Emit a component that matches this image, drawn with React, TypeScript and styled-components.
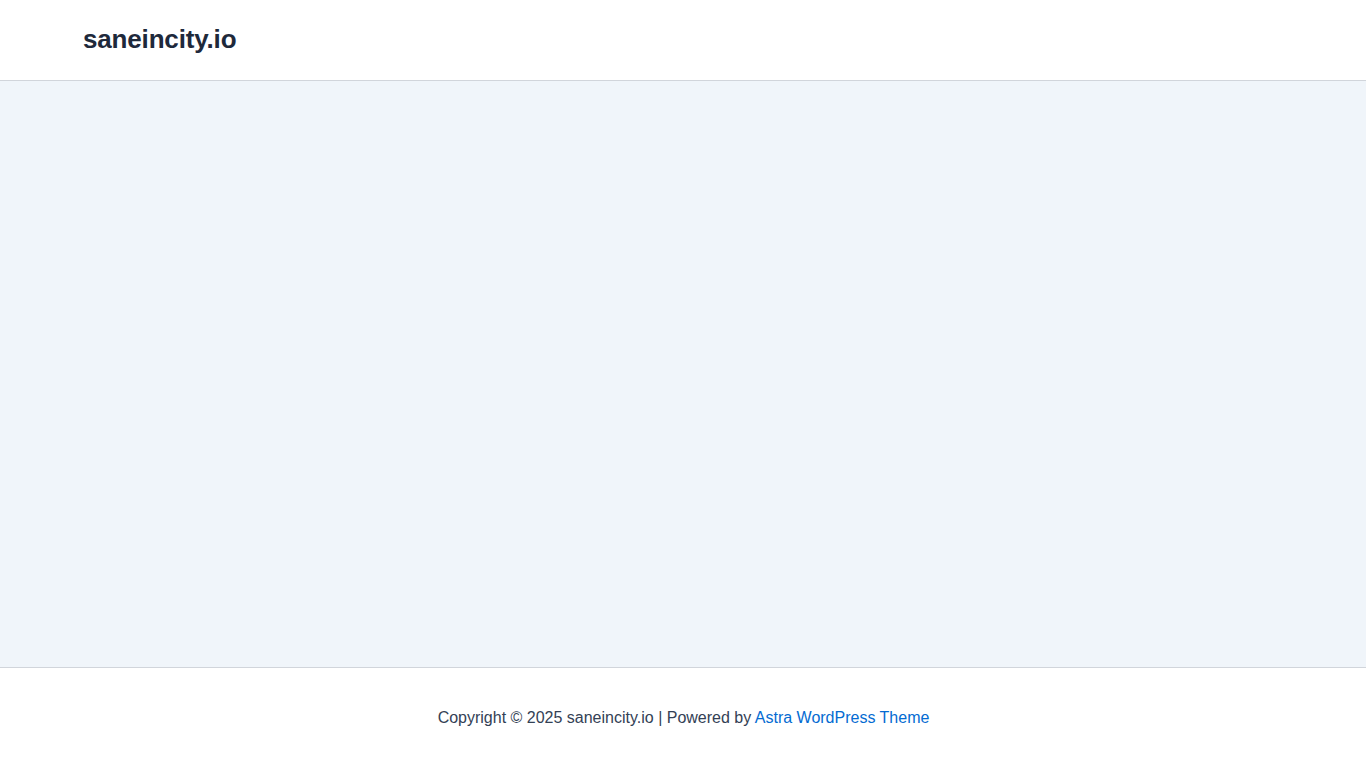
import React from "react";
import styled, { createGlobalStyle } from "styled-components";

const Global = createGlobalStyle`
  html, body { margin: 0; padding: 0; }
  body { font-family: "Liberation Sans", Arial, sans-serif; background: #fff; }
`;

const Page = styled.div`
  display: flex;
  flex-direction: column;
  height: 768px;
`;

const Header = styled.header`
  height: 80px;
  box-sizing: content-box;
  border-bottom: 1px solid #d1d5db;
  display: flex;
  align-items: center;
  padding: 0 83px;
  background: #fff;
  flex-shrink: 0;
`;

const Title = styled.a`
  font-size: 26px;
  font-weight: 700;
  letter-spacing: -0.17px;
  color: #1e293b;
  text-decoration: none;
  line-height: 1;
  margin-bottom: 2px;
`;

const Main = styled.main`
  flex: 1;
  background: #f0f5fa;
`;

const Footer = styled.footer`
  height: 100px;
  border-top: 1px solid #d1d5db;
  display: flex;
  align-items: center;
  justify-content: center;
  background: #fff;
  flex-shrink: 0;
  font-size: 16px;
  color: #334155;
  padding-left: 1px;
`;

const Link = styled.a`
  color: #046bd2;
  text-decoration: none;
`;

export default function App() {
  return (
    <Page>
      <Global />
      <Header>
        <Title href="#">saneincity.io</Title>
      </Header>
      <Main />
      <Footer>
        <span>
          Copyright © 2025 saneincity.io | Powered by <Link href="#">Astra WordPress Theme</Link>
        </span>
      </Footer>
    </Page>
  );
}
